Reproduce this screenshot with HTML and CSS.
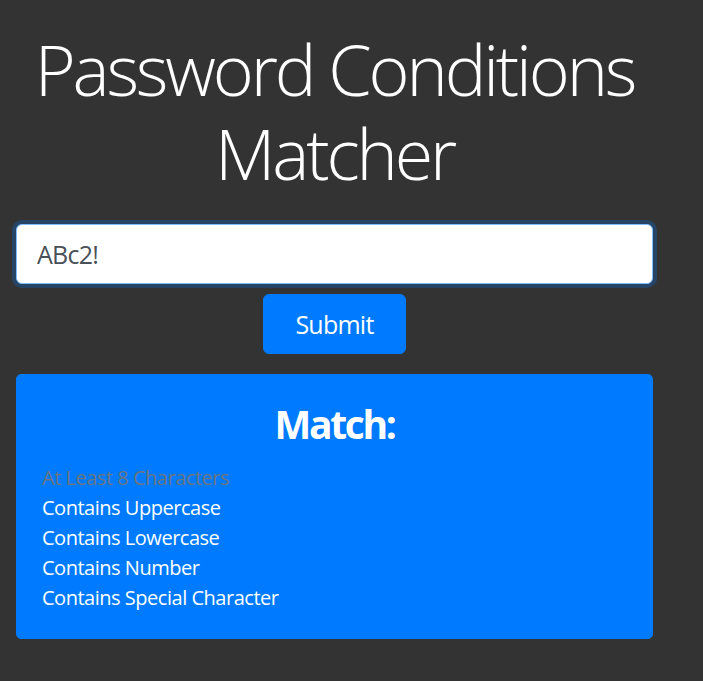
FILE: index.html
```html
<!DOCTYPE html>
<html lang="en">
<head>
<meta charset="utf-8">
<title>Password Conditions Matcher</title>
<link rel="stylesheet" href="styles.css">
</head>
<body>
<main class="container">
  <h1 class="title">Password Conditions Matcher</h1>
  <form class="pw-form" onsubmit="return false">
    <input class="pw-input" type="text" value="ABc2!" aria-label="Password">
    <button class="btn-submit" type="submit">Submit</button>
  </form>
  <section class="card">
    <h2 class="card-title">Match:</h2>
    <ul class="conditions">
      <li class="cond cond-unmet">At Least 8 Characters</li>
      <li class="cond">Contains Uppercase</li>
      <li class="cond">Contains Lowercase</li>
      <li class="cond">Contains Number</li>
      <li class="cond">Contains Special Character</li>
    </ul>
  </section>
</main>
</body>
</html>
```
FILE: styles.css
```css
* { box-sizing: border-box; }
html, body { margin: 0; padding: 0; }
body {
  background: #333333;
  color: #ffffff;
  font-family: "Open Sans", "Noto Sans", "Liberation Sans", sans-serif;
  letter-spacing: -0.03em;
}
.container {
  width: 637px;
  margin: 0 0 0 16px;
}
.title {
  margin: 27px 0 29px;
  font-weight: 300;
  font-size: 70px;
  line-height: 84px;
  letter-spacing: -0.045em;
  text-align: center;
}
.pw-form {
  display: flex;
  flex-direction: column;
  align-items: center;
}
.pw-input {
  display: block;
  width: 100%;
  height: 60px;
  padding: 0 20px;
  font-family: inherit;
  font-size: 25px;
  letter-spacing: -0.03em;
  color: #495057;
  background: #ffffff;
  border: 1px solid #80bdff;
  border-radius: 6px;
  box-shadow: 0 0 0 4px rgba(0, 123, 255, 0.25);
  outline: none;
}
.btn-submit {
  margin-top: 10px;
  height: 60px;
  padding: 0 31px;
  font-family: inherit;
  font-size: 25px;
  letter-spacing: -0.03em;
  color: #ffffff;
  background: #007bff;
  border: 1px solid #007bff;
  border-radius: 6px;
}
.card {
  margin-top: 20px;
  height: 265px;
  padding: 25px;
  background: #007bff;
  border: 1px solid #007bff;
  border-radius: 5px;
}
.card-title {
  margin: 0 0 15px;
  font-size: 39px;
  line-height: 48px;
  font-weight: 700;
  letter-spacing: -0.06em;
  text-align: center;
}
.conditions {
  list-style: none;
  margin: 0;
  padding: 0;
}
.cond {
  font-size: 20px;
  line-height: 30px;
  color: #ffffff;
}
.cond-unmet { color: #6c757d; }
```
